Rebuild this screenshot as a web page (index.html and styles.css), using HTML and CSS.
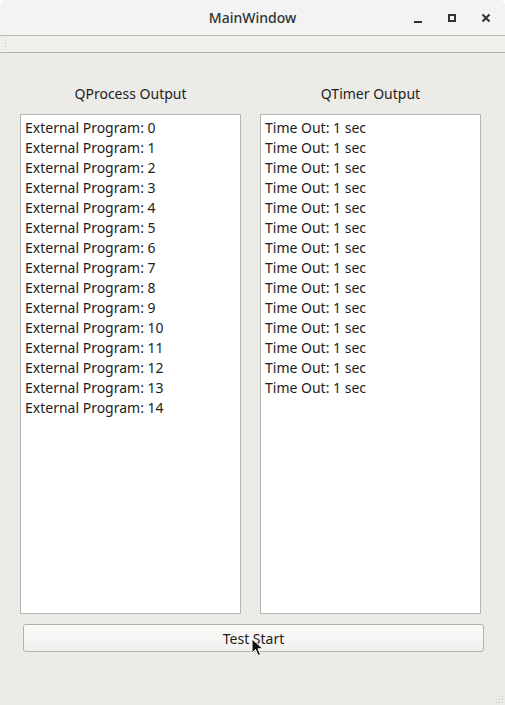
FILE: index.html
```html
<!DOCTYPE html>
<html>
<head>
    <title>MainWindow</title>
    <meta charset="UTF-8">
    <link rel="stylesheet" href="styles.css">
</head>
<body>
    <div class="window">
        <div class="titlebar">
            <span class="title">MainWindow</span>
            <div class="controls">
                <span class="ctl ctl-min"></span>
                <span class="ctl ctl-max"></span>
                <svg class="ctl-close" width="10" height="10" viewBox="0 0 10 10">
                    <path d="M1.5 1.5 L8.5 8.5 M8.5 1.5 L1.5 8.5" stroke="#2e3436" stroke-width="2"/>
                </svg>
            </div>
        </div>
        <div class="toolbar">
            <span class="grip"></span>
        </div>
        <div class="central">
            <div class="columns">
                <div class="column">
                    <div class="label">QProcess Output</div>
                    <div class="list" id="processList"></div>
                </div>
                <div class="column">
                    <div class="label">QTimer Output</div>
                    <div class="list" id="timerList"></div>
                </div>
            </div>
            <button class="btn">Test Start</button>
        </div>
        <span class="sizegrip"></span>
        <svg class="cursor" width="14" height="20" viewBox="0 0 14 20">
            <path d="M1 1 L1 15 L4.5 11.5 L7 17.5 L9.5 16.5 L7 10.8 L12 10.8 Z" fill="#111" stroke="#fff" stroke-width="1"/>
        </svg>
    </div>

    <script>
        // 填充两个输出列表
        const processList = document.getElementById('processList');
        const timerList = document.getElementById('timerList');
        let procHtml = '';
        let timerHtml = '';
        for (let i = 0; i < 15; i++) {
            procHtml += `<div class="item">External Program: ${i}</div>`;
        }
        for (let i = 0; i < 14; i++) {
            timerHtml += `<div class="item">Time Out: 1 sec</div>`;
        }
        processList.innerHTML = procHtml;
        timerList.innerHTML = timerHtml;
    </script>
</body>
</html>
```

FILE: styles.css
```css
html, body {
    margin: 0;
    padding: 0;
    width: 505px;
    height: 705px;
    overflow: hidden;
    background-color: #ffffff;
}
.window {
    position: relative;
    width: 505px;
    height: 705px;
    background-color: #edebe7;
    font-family: "Noto Sans", "DejaVu Sans", sans-serif;
    color: #1c1c1c;
    border-radius: 6px 6px 0 0;
    overflow: hidden;
    display: flex;
    flex-direction: column;
}
.titlebar {
    height: 35px;
    background-color: #f3f3f3;
    border-bottom: 1px solid #b9b7b3;
    position: relative;
    display: flex;
    align-items: center;
    justify-content: center;
}
.title {
    font-size: 14px;
    font-weight: 500;
    color: #2e3436;
}
.controls {
    position: absolute;
    right: 14px;
    top: 0;
    height: 35px;
    display: flex;
    align-items: center;
}
.ctl {
    display: inline-block;
    box-sizing: border-box;
}
.ctl-min {
    width: 8px;
    height: 2px;
    background-color: #2e3436;
    margin-top: 8px;
    margin-right: 26px;
}
.ctl-max {
    width: 8px;
    height: 8px;
    border: 2px solid #2e3436;
    margin-right: 25px;
}
.ctl-close {
    display: block;
}
.toolbar {
    height: 16px;
    background-color: #f1efeb;
    border-bottom: 1px solid #b5b2ad;
    position: relative;
}
.grip {
    position: absolute;
    left: 4px;
    top: 0;
    width: 4px;
    height: 16px;
    background-image: radial-gradient(circle, #c5c2bd 0.8px, transparent 1px);
    background-size: 3px 3px;
}
.central {
    flex: 1;
    padding: 32px 24px 0 20px;
    display: flex;
    flex-direction: column;
}
.columns {
    display: flex;
    gap: 19px;
}
.column {
    flex: 1;
    display: flex;
    flex-direction: column;
}
.label {
    text-align: center;
    font-size: 14px;
    height: 18px;
    line-height: 18px;
    margin-bottom: 11px;
}
.list {
    box-sizing: border-box;
    height: 500px;
    background-color: #ffffff;
    border: 1px solid #b8b5b0;
    padding: 3px 4px;
}
.item {
    font-size: 14px;
    height: 20px;
    line-height: 20px;
    white-space: nowrap;
}
.btn {
    margin: 10px -3px 0 3px;
    height: 28px;
    border: 1px solid #b5b2ad;
    border-radius: 3px;
    background: linear-gradient(#fbfbfa, #f1f0ee);
    font-family: "Noto Sans", "DejaVu Sans", sans-serif;
    font-size: 14px;
    color: #1c1c1c;
    padding: 0;
}
.sizegrip {
    position: absolute;
    right: 1px;
    bottom: 1px;
    width: 12px;
    height: 12px;
    background-image: radial-gradient(circle, #c5c2bd 0.8px, transparent 1px);
    background-size: 3px 3px;
    clip-path: polygon(100% 0, 100% 100%, 0 100%);
}
.cursor {
    position: absolute;
    left: 251px;
    top: 638px;
}
```
